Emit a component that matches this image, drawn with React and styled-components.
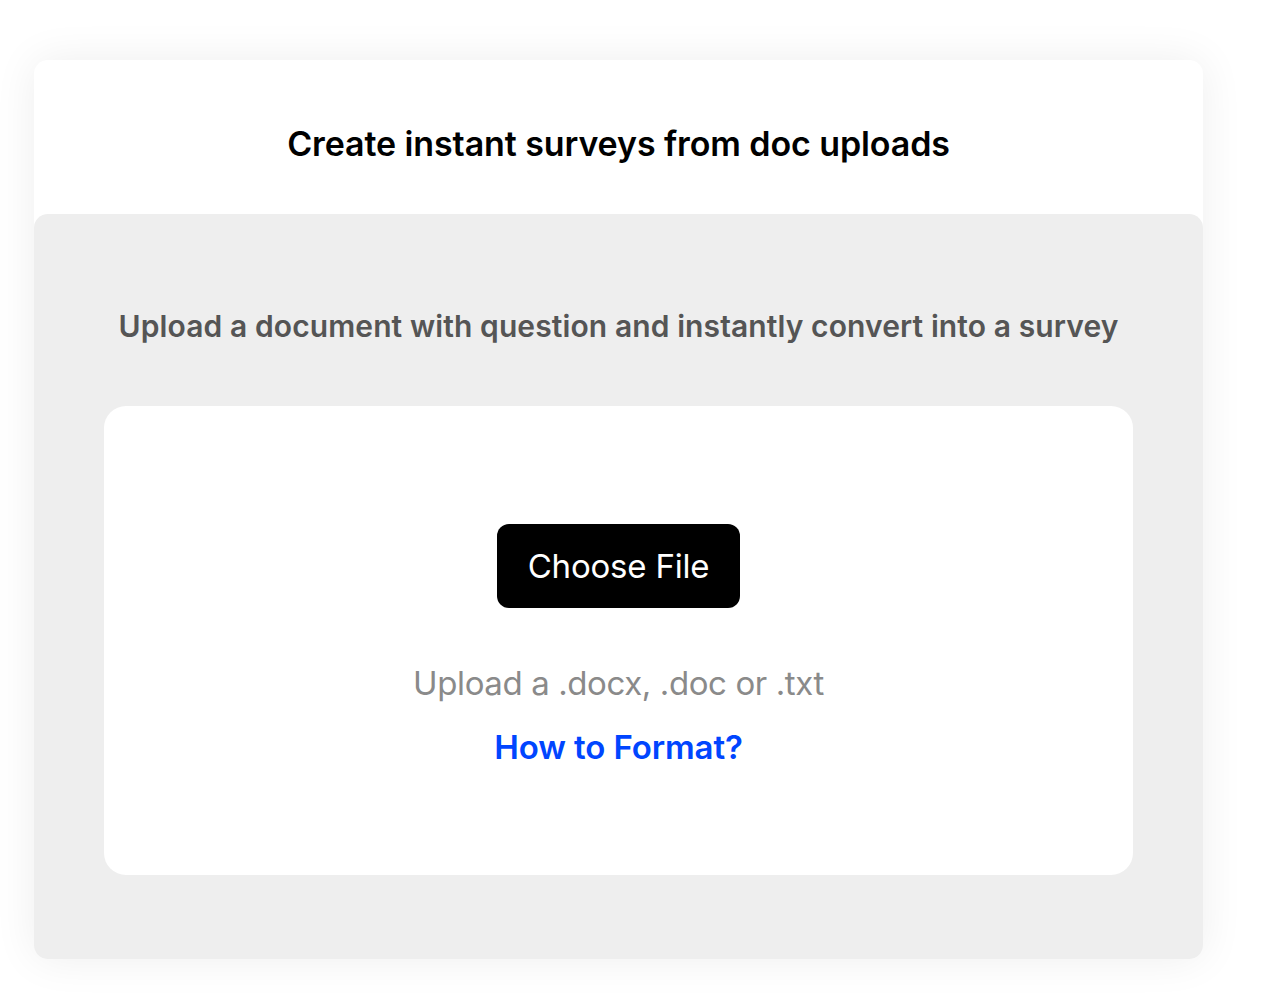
import React from "react";
import styled, { createGlobalStyle } from "styled-components";

const Global = createGlobalStyle`
  html, body { margin: 0; padding: 0; background: #ffffff; }
  body { font-family: Inter, "Noto Sans", sans-serif; -webkit-font-smoothing: antialiased; }
`;

const Page = styled.div`
  padding: 60px 62px 37px 34px;
`;

const Card = styled.div`
  width: 1169px;
  background: #ffffff;
  border-radius: 14px;
  box-shadow: 0 0 44px rgba(0, 0, 0, 0.07);
  display: flex;
  flex-direction: column;
`;

const Header = styled.div`
  height: 154px;
  display: flex;
  align-items: center;
  justify-content: center;
  padding-top: 12px;
  box-sizing: border-box;
`;

const Title = styled.h1`
  margin: 0;
  font-size: 34px;
  font-weight: 600;
  color: #000;
  letter-spacing: -0.1px;
`;

const Body = styled.div`
  background: #eeeeee;
  border-radius: 14px;
  padding: 90px 70px 84px;
  display: flex;
  flex-direction: column;
  align-items: center;
`;

const Subtitle = styled.p`
  margin: 0 0 58px;
  font-size: 30px;
  line-height: 44px;
  font-weight: 600;
  color: #555555;
  letter-spacing: 0.1px;
`;

const DropBox = styled.div`
  align-self: stretch;
  height: 469px;
  box-sizing: border-box;
  background: #ffffff;
  border-radius: 22px;
  padding-top: 118px;
  display: flex;
  flex-direction: column;
  align-items: center;
`;

const ChooseButton = styled.button`
  width: 243px;
  height: 84px;
  border: none;
  border-radius: 12px;
  background: #000;
  color: #fff;
  font-family: inherit;
  font-size: 33px;
  font-weight: 400;
  letter-spacing: -0.2px;
  cursor: pointer;
`;

const Hint = styled.div`
  margin-top: 55px;
  font-size: 33px;
  line-height: 40px;
  color: #8a8a8a;
  letter-spacing: -0.4px;
`;

const FormatLink = styled.a`
  margin-top: 24px;
  font-size: 33px;
  line-height: 40px;
  font-weight: 600;
  color: #0045ff;
  text-decoration: none;
  letter-spacing: -0.1px;
  cursor: pointer;
`;

export default function App() {
  return (
    <>
      <Global />
      <Page>
        <Card>
          <Header>
            <Title>Create instant surveys from doc uploads</Title>
          </Header>
          <Body>
            <Subtitle>Upload a document with question and instantly convert into a survey</Subtitle>
            <DropBox>
              <ChooseButton>Choose File</ChooseButton>
              <Hint>Upload a .docx, .doc or .txt</Hint>
              <FormatLink>How to Format?</FormatLink>
            </DropBox>
          </Body>
        </Card>
      </Page>
    </>
  );
}
